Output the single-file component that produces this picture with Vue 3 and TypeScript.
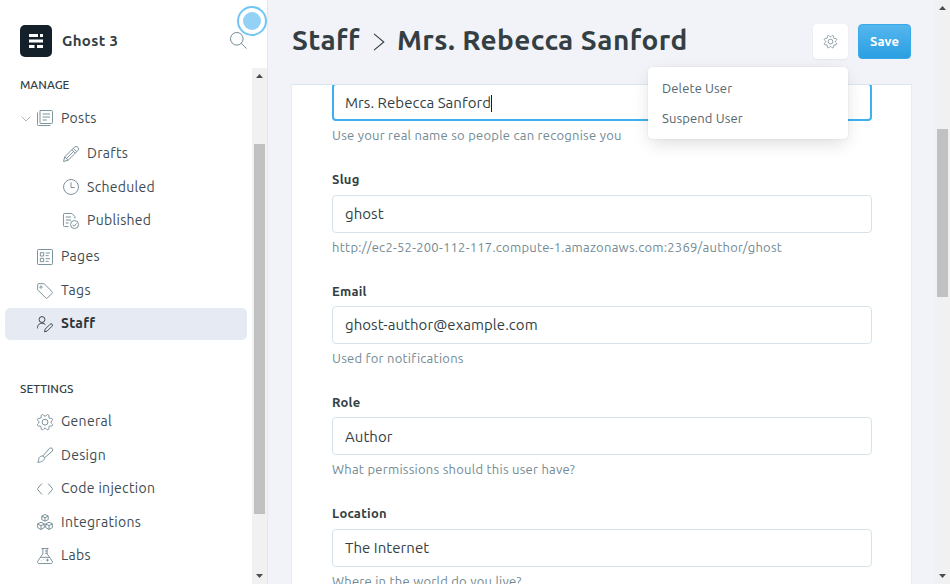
<script setup lang="ts">
import { ref } from 'vue'

interface NavItem {
  label: string
  icon: string
  sub?: boolean
  active?: boolean
  open?: boolean
  spaced?: boolean
}

interface Field {
  label?: string
  value: string
  hint: string
  focused?: boolean
}

const manage: NavItem[] = [
  { label: 'Posts', icon: 'posts', open: true },
  { label: 'Drafts', icon: 'pencil', sub: true, spaced: true },
  { label: 'Scheduled', icon: 'clock', sub: true },
  { label: 'Published', icon: 'published', sub: true },
  { label: 'Pages', icon: 'pages', spaced: true },
  { label: 'Tags', icon: 'tag' },
  { label: 'Staff', icon: 'staff', active: true },
]

const settings: NavItem[] = [
  { label: 'General', icon: 'gear' },
  { label: 'Design', icon: 'brush' },
  { label: 'Code injection', icon: 'code' },
  { label: 'Integrations', icon: 'modules' },
  { label: 'Labs', icon: 'flask' },
]

const fields: Field[] = [
  { value: 'Mrs. Rebecca Sanford', hint: 'Use your real name so people can recognise you', focused: true },
  { label: 'Slug', value: 'ghost', hint: 'http://ec2-52-200-112-117.compute-1.amazonaws.com:2369/author/ghost' },
  { label: 'Email', value: 'ghost-author@example.com', hint: 'Used for notifications' },
  { label: 'Role', value: 'Author', hint: 'What permissions should this user have?' },
  { label: 'Location', value: 'The Internet', hint: 'Where in the world do you live?' },
]

const gear =
  '<path d="M10.55 2.66a1.95 1.95 0 0 0 2.9 0l1-1.1a1.95 1.95 0 0 1 3.4 1.4l-.08 1.5a1.96 1.96 0 0 0 2.05 2.05l1.5-.08a1.96 1.96 0 0 1 1.4 3.4l-1.1 1a1.96 1.96 0 0 0 0 2.9l1.1 1a1.96 1.96 0 0 1-1.4 3.42l-1.5-.08a1.95 1.95 0 0 0-2.05 2.05l.08 1.5a1.96 1.96 0 0 1-3.4 1.4l-1-1.1a1.96 1.96 0 0 0-2.9 0l-1 1.1a1.96 1.96 0 0 1-3.4-1.4l.07-1.5a1.96 1.96 0 0 0-2.05-2.05l-1.5.08a1.96 1.96 0 0 1-1.4-3.42l1.1-1a1.96 1.96 0 0 0 0-2.9l-1.1-1a1.96 1.96 0 0 1 1.4-3.4l1.5.08a1.96 1.96 0 0 0 2.05-2.05l-.07-1.5a1.96 1.96 0 0 1 3.4-1.4z"/><circle cx="12" cy="12.2" r="4.4"/>'

const icons: Record<string, string> = {
  posts:
    '<path d="M4.5.75h17.2a1.5 1.5 0 0 1 1.5 1.5v16.5a1.5 1.5 0 0 1-1.5 1.5H6a1.5 1.5 0 0 1-1.5-1.5z"/><path d="M.8 3.8v18a1.5 1.5 0 0 0 1.5 1.5h17.8M8.3 6h11.2M8.3 10.5h11.2M8.3 15h6.5"/>',
  pencil:
    '<path d="M22.2 1.8a3.6 3.6 0 0 0-5.1 0L2.6 16.3.8 23.2l6.9-1.8L22.2 6.9a3.6 3.6 0 0 0 0-5.1zM15.4 3.5l5.1 5.1M2.6 16.3l5.1 5.1M13.3 5.6l5.1 5.1M15.9 8.2 5.2 18.9"/>',
  clock: '<circle cx="12" cy="12" r="11.2"/><path d="M12 5v7.8h5.6"/>',
  published:
    '<path d="M8.3 20.3H2.2a1.5 1.5 0 0 1-1.5-1.5V2.2A1.5 1.5 0 0 1 2.2.7h11l4.6 4.6v3M4 6h8M4 10.5h8M4 15h4.5"/><circle cx="17.3" cy="17.3" r="6"/><path d="m20 15.6-3.2 4.2-2.3-2.1"/>',
  pages:
    '<rect x=".75" y=".75" width="22.5" height="22.5" rx="1.2"/><rect x="5" y="5.5" width="5" height="5"/><rect x="5" y="14" width="5" height="5"/><path d="M13 6h6.5M13 10h4.5M13 14.5h6.5M13 18.5h4.5"/>',
  tag:
    '<path d="M1 2.2v7.2a2 2 0 0 0 .6 1.4l11.7 11.8a1.6 1.6 0 0 0 2.2 0l7.3-7.3a1.6 1.6 0 0 0 0-2.2L11.2 1.6A2 2 0 0 0 9.8 1H2.4A1.4 1.4 0 0 0 1 2.2z"/><circle cx="6" cy="6.2" r="1.6"/>',
  staff:
    '<circle cx="7.5" cy="5.3" r="4.4"/><path d="M.8 18.6v-1.4c0-3.8 3-6.4 6.7-6.4 2.1 0 3.9.8 5.1 2.1M22.6 12.3a2 2 0 0 0-2.9 0l-7.4 7.4-1.1 4 4-1.1 7.4-7.4a2 2 0 0 0 0-2.9z"/>',
  gear,
  brush:
    '<path d="M8.7 13.6 18.8 2a3 3 0 0 1 4.2 4.2L11.2 16.2M8.7 13.6c1.4.3 2.3 1.3 2.5 2.6.3 3.7-3.9 6.7-10.4 6.7 1.7-1.4 1.5-3 1.9-5.2.5-2.8 3.2-4.7 6-4.1z"/>',
  code: '<path d="M7.3 3.8.9 11.3a1 1 0 0 0 0 1.4l6.4 7.5M16.7 3.8l6.4 7.5a1 1 0 0 1 0 1.4l-6.4 7.5"/>',
  modules:
    '<path d="m12 .8 4.8 2.2v5.4L12 10.8 7.2 8.4V3zM7.2 3.3 12 5.6l4.8-2.3M12 5.6v5M6 12.4l4.9 2.2v5.9L6 23.2l-5-2.7v-5.9zM1 15l5 2.4 4.9-2.4M6 17.4v5.8M18 12.4l5 2.2v5.9l-5 2.7-4.9-2.7v-5.9zM13.1 15l4.9 2.4 5-2.4M18 17.4v5.8"/>',
  flask:
    '<path d="M6.7.8h10.6M8.8.8v8L1.2 19.7a2.3 2.3 0 0 0 1.9 3.6h17.8a2.3 2.3 0 0 0 1.9-3.6L15.2 8.8v-8M5.2 14h13.6M12 4.5h3.2M12 8h3.2M15.7 16.2v4M13.7 18.2h4M6.5 19h.6M10 17.2h.6"/>',
}

const menu = ['Delete User', 'Suspend User']

const menuOpen = ref(true)
</script>

<template>
  <div class="app">
    <aside class="sidebar">
      <header class="brand">
        <svg class="logo" viewBox="0 0 32 32">
          <rect width="32" height="32" rx="5" fill="#15212a" />
          <path d="M9 9h9v3H9zM20 9h3v3h-3zM9 14.5h14v3H9zM9 20h5.5v3H9zM17 20h6v3h-6z" fill="#fff" />
        </svg>
        <span class="site">Ghost 3</span>
        <svg class="search" viewBox="0 0 17 17">
          <circle cx="6.8" cy="6.8" r="6.3" />
          <path d="m11.3 11.3 5.2 5.2" />
        </svg>
        <svg class="beacon" viewBox="0 0 30 30">
          <circle cx="15" cy="15" r="14" fill="#fff" stroke="#70c5f4" stroke-width="2" />
          <circle cx="15" cy="15" r="9" fill="#93d2f5" />
        </svg>
      </header>
      <div class="side-body">
        <nav class="nav">
          <h2 class="manage">Manage</h2>
          <a v-for="n in manage" :key="n.label" class="item" :class="{ sub: n.sub, active: n.active, spaced: n.spaced }">
            <svg v-if="n.open" class="caret-down" viewBox="0 0 10 6"><path d="m.7.7 4.3 4.3L9.3.7" /></svg>
            <svg class="icon" viewBox="0 0 24 24" v-html="icons[n.icon]" />
            <span>{{ n.label }}</span>
          </a>
          <h2 class="settings">Settings</h2>
          <a v-for="n in settings" :key="n.label" class="item">
            <svg class="icon" viewBox="0 0 24 24" v-html="icons[n.icon]" />
            <span>{{ n.label }}</span>
          </a>
        </nav>
        <div class="scrollbar side-scroll">
          <svg viewBox="0 0 15 15"><path d="M4 10h7L7.5 6z" /></svg>
          <div class="thumb" />
          <svg viewBox="0 0 15 15"><path d="M4 5h7L7.5 9z" /></svg>
        </div>
      </div>
    </aside>

    <main class="main">
      <div class="content">
        <header class="head">
          <h1>
            <span class="crumb">Staff</span>
            <svg class="sep" viewBox="0 0 12 18"><path d="m1 .8 9.8 8.2L1 17.2" /></svg>
            <span class="name">Mrs. Rebecca Sanford</span>
          </h1>
          <div class="actions">
            <button class="btn cog" type="button" @click="menuOpen = !menuOpen">
              <svg viewBox="0 0 24 24" v-html="gear" />
            </button>
            <button class="btn save" type="button">Save</button>
            <ul v-if="menuOpen" class="menu">
              <li v-for="m in menu" :key="m">{{ m }}</li>
            </ul>
          </div>
        </header>
        <section class="card">
          <form class="form">
            <div v-for="f in fields" :key="f.value" class="group">
              <label v-if="f.label">{{ f.label }}</label>
              <div class="input" :class="{ focused: f.focused }">
                <span>{{ f.value }}</span>
                <i v-if="f.focused" class="cursor" />
              </div>
              <p>{{ f.hint }}</p>
            </div>
          </form>
        </section>
      </div>
      <div class="scrollbar main-scroll">
        <svg viewBox="0 0 15 15"><path d="M4 10h7L7.5 6z" /></svg>
        <div class="thumb" />
        <svg viewBox="0 0 15 15"><path d="M4 5h7L7.5 9z" /></svg>
      </div>
    </main>
  </div>
</template>

<style>
body {
  margin: 0;
  overflow: hidden;
}
</style>

<style scoped>
* {
  box-sizing: border-box;
}
.app {
  display: flex;
  height: 584px;
  overflow: hidden;
  background: #f2f3f8;
  color: #343f44;
  font-family: Ubuntu, 'Noto Sans', sans-serif;
}
h1, h2, p, ul {
  margin: 0;
  padding: 0;
}
.sidebar {
  display: flex;
  flex-direction: column;
  width: 268px;
  background: #fff;
  border-right: 1px solid #e3e7ef;
}
.brand {
  position: relative;
  display: flex;
  align-items: center;
  height: 68px;
  padding: 14px 20px 0 20px;
}
.logo {
  width: 32px;
  height: 32px;
}
.site {
  margin-left: 10px;
  margin-top: -1px;
  font-size: 15px;
  font-weight: 700;
  letter-spacing: 0.35px;
}
.search {
  width: 17px;
  height: 17px;
  margin-left: auto;
  margin-top: -2px;
  fill: none;
  stroke: #738a94;
  stroke-width: 1;
}
.beacon {
  position: absolute;
  left: 237px;
  top: 6px;
  width: 30px;
  height: 30px;
}
.side-body {
  display: flex;
  flex: 1;
  min-height: 0;
}
.nav {
  flex: 1;
  padding: 0 5px;
}
h2 {
  padding-left: 15px;
  font-size: 11.8px;
  line-height: 16px;
  font-weight: 500;
  text-transform: uppercase;
}
.manage {
  margin: 9.1px 0 8.9px;
}
.settings {
  margin: 40.9px 0 8.7px;
}
.item {
  position: relative;
  display: flex;
  align-items: center;
  height: 32px;
  margin-bottom: 1.5px;
  padding-left: 32px;
  border-radius: 5px;
  color: #3e4b52;
  font-size: 14px;
  line-height: 20px;
  letter-spacing: 0.3px;
}
.item.spaced {
  margin-top: 4.5px;
}
.item.sub {
  padding-left: 58px;
}
.item.sub.spaced {
  margin-top: 3.2px;
}
.item.active {
  background: #e5eaf3;
  color: #2c3539;
  font-weight: 700;
}
.item.active span,
.item.spaced:not(.sub) span {
  margin-bottom: 0.8px;
}
.icon {
  position: relative;
  top: 0.5px;
  width: 16px;
  height: 16px;
  margin-right: 8px;
  overflow: visible;
  fill: none;
  stroke: #738a94;
  stroke-width: 1.4;
  stroke-linejoin: round;
}
.active .icon {
  stroke: #343f44;
}
.caret-down {
  position: absolute;
  left: 16px;
  top: 14px;
  width: 10px;
  height: 6px;
  fill: none;
  stroke: #a9b7be;
  stroke-width: 1;
}
.scrollbar {
  display: flex;
  flex-direction: column;
  width: 15px;
  background: #f1f1f1;
}
.scrollbar svg {
  width: 15px;
  height: 15px;
  fill: #4d4d4d;
}
.scrollbar .thumb {
  width: 11px;
  margin: 0 2px auto;
  background: #c1c1c1;
}
.side-scroll .thumb {
  height: 370px;
  margin-top: 61px;
}
.main-scroll .thumb {
  height: 168px;
  margin-top: 114px;
}
.main {
  display: flex;
  flex: 1;
  min-width: 0;
}
.content {
  display: flex;
  flex: 1;
  flex-direction: column;
  min-width: 0;
  padding: 0 23px;
}
.head {
  display: flex;
  flex: none;
  align-items: flex-start;
  justify-content: space-between;
  height: 84px;
  padding: 24px 1px 0;
}
h1 {
  display: flex;
  align-items: center;
  height: 34px;
  margin-top: -1px;
  font-size: 28px;
  line-height: 34px;
  letter-spacing: 0.42px;
  white-space: nowrap;
}
.crumb {
  width: 81px;
}
.sep {
  width: 12px;
  height: 18px;
  margin: 3px 12px 0 0;
  fill: none;
  stroke: #343f44;
  stroke-width: 1.1;
}
.actions {
  position: relative;
  display: flex;
  gap: 10px;
}
.btn {
  display: flex;
  align-items: center;
  justify-content: center;
  height: 35px;
  padding: 0;
  border: 0;
  border-radius: 4px;
  font-family: inherit;
}
.cog {
  width: 35px;
  background: #fff;
  box-shadow: 0 0 1px rgba(0, 0, 0, 0.08), 0 1px 2px rgba(0, 0, 0, 0.05);
}
.cog svg {
  width: 13px;
  height: 13px;
  overflow: visible;
  fill: none;
  stroke: #738a94;
  stroke-width: 1.5;
}
.save {
  width: 53px;
  padding-bottom: 1px;
  border: 1px solid #3aa9e8;
  background: linear-gradient(#55b6ee, #2a9fe2);
  color: #fff;
  font-size: 13px;
  font-weight: 700;
  letter-spacing: 0.1px;
}
.menu {
  position: absolute;
  z-index: 2;
  top: 43px;
  left: -165px;
  width: 200px;
  height: 72px;
  padding: 6px 0;
  list-style: none;
  background: #fff;
  border-radius: 4px;
  box-shadow: 0 0 1px rgba(0, 0, 0, 0.2), 0 6px 18px -3px rgba(0, 0, 0, 0.16);
}
.menu li {
  padding-left: 14px;
  color: #54666d;
  font-size: 13px;
  line-height: 30px;
  letter-spacing: 0.13px;
}
.card {
  flex: 1;
  min-height: 0;
  overflow: hidden;
  padding: 0 39px 0 40px;
  background: #fff;
  border: 1px solid #e9edf3;
  border-top-color: #dae6ee;
  border-bottom: 0;
}
.form {
  display: flex;
  flex-direction: column;
  gap: 25.35px;
  margin-top: -1.7px;
}
.group label {
  display: block;
  height: 19px;
  margin-bottom: 6px;
  padding-top: 0.6px;
  font-size: 13px;
  line-height: 19px;
  font-weight: 700;
  letter-spacing: 0.25px;
}
.input {
  display: flex;
  align-items: center;
  height: 38px;
  padding: 0.4px 12px 0;
  border: 1px solid #d6e3eb;
  border-radius: 4px;
  color: #343f44;
  font-size: 15px;
  line-height: 20px;
  letter-spacing: 0.05px;
  white-space: nowrap;
}
.input.focused {
  padding: 1.4px 11px 0;
  border: 2px solid #3eb0ef;
}
.cursor {
  width: 1px;
  height: 17px;
  background: #15212a;
}
.group p {
  height: 18px;
  margin-top: 5px;
  color: #738a94;
  font-size: 13px;
  line-height: 18px;
  letter-spacing: 0.25px;
  white-space: nowrap;
}
</style>
